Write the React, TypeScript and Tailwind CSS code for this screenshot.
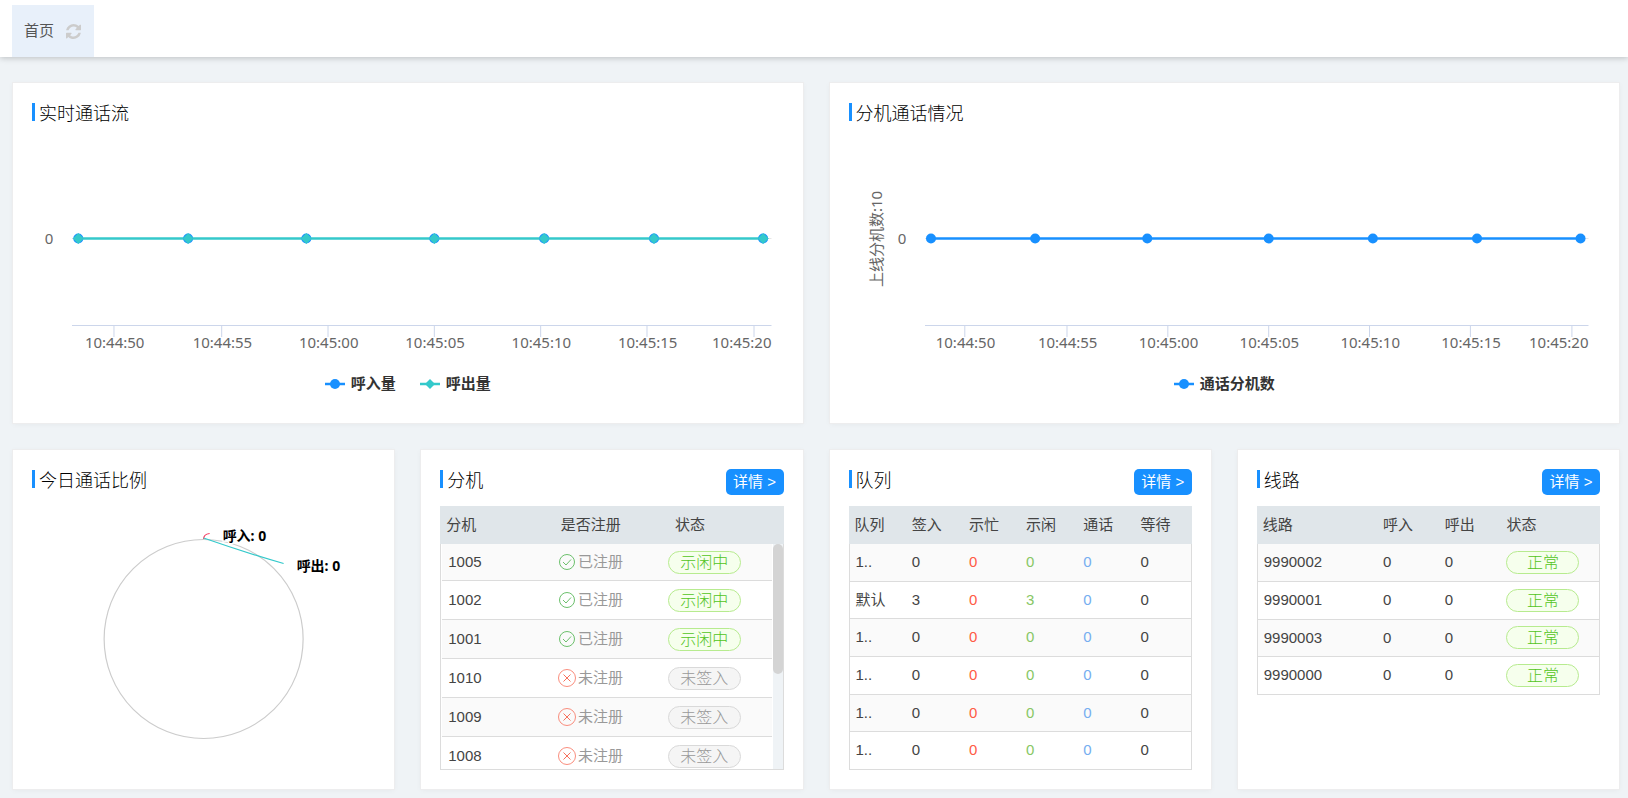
import type { ReactNode } from "react"
import clsx from "clsx"

const ticks = [
    { label: "10:44:50", x: 6 },
    { label: "10:44:55", x: 21.4 },
    { label: "10:45:00", x: 36.6 },
    { label: "10:45:05", x: 51.8 },
    { label: "10:45:10", x: 67 },
    { label: "10:45:15", x: 82.2 },
    { label: "10:45:20", x: 97.5 },
]
const points = [0.9, 16.6, 33.5, 51.8, 67.5, 83.2, 98.8]

const extensions = [
    { no: "1005", online: true },
    { no: "1002", online: true },
    { no: "1001", online: true },
    { no: "1010", online: false },
    { no: "1009", online: false },
    { no: "1008", online: false },
]

const queues = [
    ["1..", 0, 0, 0, 0, 0],
    ["默认", 3, 0, 3, 0, 0],
    ["1..", 0, 0, 0, 0, 0],
    ["1..", 0, 0, 0, 0, 0],
    ["1..", 0, 0, 0, 0, 0],
    ["1..", 0, 0, 0, 0, 0],
]
const queueColors = ["", "", "text-[#ff5b45]", "text-[#87c765]", "text-[#76aef0]", ""]

const lines = ["9990002", "9990001", "9990003", "9990000"]

function Card({ title, detail, children }: { title: string; detail?: boolean; children: ReactNode }) {
    return (
        <section className="min-w-0 bg-white p-[19px] shadow-[0_0_0_1px_#ededee,0_1px_6px_rgba(0,0,0,0.05)]">
            <div className="flex items-start justify-between">
                <h2 className="flex gap-1 text-lg leading-6 font-light text-black">
                    <span className="mt-px h-[18px] w-[3px] bg-[#1890ff]" />
                    {title}
                </h2>
                {detail && (
                    <button className="h-[26px] w-[58px] rounded-[5px] bg-[#1890ff] text-[15px] leading-[26px] text-white">
                        详情 &gt;
                    </button>
                )}
            </div>
            {children}
        </section>
    )
}

function Marker({ color, diamond }: { color: string; diamond?: boolean }) {
    return (
        <svg width="20" height="12" viewBox="0 0 20 12">
            <path d="M0 6H20" stroke={color} strokeWidth="2.5" />
            {diamond ? <path d="M10 1L15 6L10 11L5 6Z" fill={color} /> : <circle cx="10" cy="6" r="5" fill={color} />}
        </svg>
    )
}

type Series = { name: string; color: string; diamond?: boolean }

function LineChart({ series, yTitle }: { series: Series[]; yTitle?: string }) {
    const top = series[series.length - 1]
    return (
        <>
            <div className="flex pr-3 text-[15px]">
                <svg className={clsx("h-[230px] shrink-0 overflow-visible", yTitle ? "w-19" : "w-10")}>
                    {yTitle && (
                        <text transform="translate(33 113) rotate(-90)" textAnchor="middle" fill="#666">
                            {yTitle}
                        </text>
                    )}
                    <text x={yTitle ? 53 : 17} y="118" textAnchor="middle" fill="#666">0</text>
                </svg>
                <svg className="h-[230px] min-w-0 flex-1 overflow-visible">
                    <line x1="0" x2="100%" y1="112.5" y2="112.5" stroke="#e6e6e6" />
                    <line x1="0" x2="100%" y1="199.5" y2="199.5" stroke="#ccd6eb" />
                    {ticks.map((t, i) => (
                        <g key={t.label}>
                            <line x1={`${t.x}%`} x2={`${t.x}%`} y1="199" y2="211" stroke="#ccd6eb" />
                            <text
                                x={i === ticks.length - 1 ? "100%" : `${t.x + 0.1}%`}
                                y="222"
                                textAnchor={i === ticks.length - 1 ? "end" : "middle"}
                                fill="#666"
                            >
                                {t.label}
                            </text>
                        </g>
                    ))}
                    <line x1="0.9%" x2="98.8%" y1="112.5" y2="112.5" stroke={top.color} strokeWidth="2.5" />
                    {points.map((x) => (
                        <g key={x}>
                            <circle cx={`${x}%`} cy="112.5" r="5" fill="#1890ff" />
                            {top.diamond && (
                                <svg x={`${x}%`} y="112.5" className="overflow-visible">
                                    <path d="M0 -5L5 0L0 5L-5 0Z" fill={top.color} stroke={top.color} strokeLinejoin="round" />
                                </svg>
                            )}
                        </g>
                    ))}
                </svg>
            </div>
            <div className="mt-[18px] mb-[10px] flex h-5 items-center justify-center gap-6 text-[15px] leading-5 font-bold text-[#333]">
                {series.map((s) => (
                    <span key={s.name} className="flex items-center gap-[6px]">
                        <Marker color={s.color} diamond={s.diamond} />
                        {s.name}
                    </span>
                ))}
            </div>
        </>
    )
}

function PieChart() {
    return (
        <svg className="mt-[13px] h-[264px] w-full text-sm font-bold">
            <svg x="50%" y="133" className="overflow-visible">
                <circle r="99.5" fill="none" stroke="#ccc" strokeWidth="1.2" />
                <path d="M0 -100C0 -104 2 -105 6 -105.5" fill="none" stroke="#f5365c" strokeWidth="1.2" />
                <path d="M0 -101C20 -94 40 -87 80 -75.5" fill="none" stroke="#34c9cb" strokeWidth="1.2" />
                <g stroke="#fff" strokeWidth="3" paintOrder="stroke" fill="#000">
                    <text x="19" y="-98">呼入: 0</text>
                    <text x="93" y="-68">呼出: 0</text>
                </g>
            </svg>
        </svg>
    )
}

function StatusIcon({ ok }: { ok: boolean }) {
    return ok ? (
        <svg width="16" height="16" viewBox="0 0 16 16" fill="none" stroke="#6cc06c">
            <circle cx="8" cy="8" r="7.5" />
            <path d="M4 8L7 11L12 5.5" />
        </svg>
    ) : (
        <svg className="-mx-px" width="18" height="18" viewBox="0 0 18 18" fill="none" stroke="#f8705c">
            <circle cx="9" cy="9" r="8.5" strokeOpacity="0.8" />
            <path d="M5.5 5.5L12.5 12.5M12.5 5.5L5.5 12.5" />
        </svg>
    )
}

function Badge({ on, children }: { on: boolean; children: ReactNode }) {
    return (
        <span
            className={clsx(
                "block h-[23px] w-[73px] rounded-full border text-center text-base leading-[21px] font-light",
                on ? "border-[#b7eb8f] bg-[#f6ffed] text-[#52c41a]" : "border-[#d9d9d9] bg-[#f5f5f5] text-[#999]"
            )}
        >
            {children}
        </span>
    )
}

// the header stays in place while the rows scroll below it
function ExtensionTable() {
    return (
        <div className="relative mt-[11px]">
            <table className="block text-left text-[15px] text-[#444]">
                <thead className="block bg-[#e0e6ea]">
                    <tr className="grid h-[38px] grid-cols-3 items-center">
                        <th className="pl-[6px] font-normal">分机</th>
                        <th className="pl-[6px] font-normal">是否注册</th>
                        <th className="pl-[6px] font-normal">状态</th>
                    </tr>
                </thead>
                <tbody className="block h-[226px] overflow-y-auto border border-t-0 border-[#dcdcdc] pr-[11px] pl-px [scrollbar-width:none]">
                    {extensions.map((e) => (
                        <tr
                            key={e.no}
                            className="grid h-[39px] grid-cols-3 items-center border-b border-[#dcdcdc] first:h-[37px] odd:bg-[#fafafa]"
                        >
                            <td className="pl-[6px]">{e.no}</td>
                            <td className="flex items-center gap-[3px] pl-[7px] text-[#999]">
                                <StatusIcon ok={e.online} />
                                {e.online ? "已注册" : "未注册"}
                            </td>
                            <td className="pl-[6px]">
                                <Badge on={e.online}>{e.online ? "示闲中" : "未签入"}</Badge>
                            </td>
                        </tr>
                    ))}
                </tbody>
            </table>
            <div className="absolute top-[38px] right-px bottom-px w-[10px] bg-[#eff3f6]">
                <div className="h-[130px] rounded-full bg-[#d4d4d4]" />
            </div>
        </div>
    )
}

function QueueTable() {
    return (
        <table className="mt-[11px] h-[264px] w-full table-fixed border-separate border-spacing-0 text-left text-[15px] text-[#444]">
            <thead>
                <tr className="h-[38px] bg-[#e0e6ea]">
                    {["队列", "签入", "示忙", "示闲", "通话", "等待"].map((h) => (
                        <th key={h} className="pl-[6px] font-normal">{h}</th>
                    ))}
                </tr>
            </thead>
            <tbody>
                {queues.map((row, i) => (
                    <tr key={i} className="odd:bg-[#fafafa]">
                        {row.map((v, j) => (
                            <td
                                key={j}
                                className={clsx(
                                    "border-b border-[#dcdcdc] pl-[6px] first:border-l last:border-r",
                                    queueColors[j]
                                )}
                            >
                                {v}
                            </td>
                        ))}
                    </tr>
                ))}
            </tbody>
        </table>
    )
}

function LineTable() {
    return (
        <table className="mt-[11px] h-[189px] w-full table-fixed border-separate border-spacing-0 text-left text-[15px] text-[#444]">
            <thead>
                <tr className="h-[38px] bg-[#e0e6ea]">
                    <th className="w-[35%] pl-[6px] font-normal">线路</th>
                    <th className="w-[18%] pl-[6px] font-normal">呼入</th>
                    <th className="w-[18%] pl-[6px] font-normal">呼出</th>
                    <th className="pl-[6px] font-normal">状态</th>
                </tr>
            </thead>
            <tbody>
                {lines.map((no) => (
                    <tr key={no} className="odd:bg-[#fafafa]">
                        <td className="border-b border-l border-[#dcdcdc] pl-[6px]">{no}</td>
                        <td className="border-b border-[#dcdcdc] pl-[6px]">0</td>
                        <td className="border-b border-[#dcdcdc] pl-[6px]">0</td>
                        <td className="border-r border-b border-[#dcdcdc] pl-[6px]">
                            <Badge on>正常</Badge>
                        </td>
                    </tr>
                ))}
            </tbody>
        </table>
    )
}

function Header() {
    return (
        <header className="relative flex bg-white pt-[5px] pl-3 shadow-[0_1px_6px_rgba(0,0,0,0.22)]">
            <div className="flex h-[52px] items-center gap-3 bg-[#e8f0fa] pr-[13px] pl-3">
                <a href="#" className="text-[15px] text-[#555]">首页</a>
                <button aria-label="刷新">
                    <svg className="block" width="15" height="15" viewBox="0 0 1536 1536" fill="#ccc">
                        <path d="M1511 928q0 5-1 7-64 268-268 434.5t-478 166.5q-146 0-282.5-55t-243.5-157l-129 129q-19 19-45 19t-45-19-19-45v-448q0-26 19-45t45-19h448q26 0 45 19t19 45-19 45l-137 137q71 66 161 102t187 36q134 0 250-65t186-179q11-17 53-117 8-23 30-23h192q13 0 22.5 9.5t9.5 22.5zm25-800v448q0 26-19 45t-45 19h-448q-26 0-45-19t-19-45 19-45l138-138q-148-137-349-137-134 0-250 65t-186 179q-11 17-53 117-8 23-30 23h-199q-13 0-22.5-9.5t-9.5-22.5v-7q65-268 270-434.5t480-166.5q146 0 284 55.5t245 156.5l130-129q19-19 45-19t45 19 19 45z" />
                    </svg>
                </button>
            </div>
        </header>
    )
}

export default function App() {
    return (
        <div className="min-h-screen bg-[#eff3f6] font-['Liberation_Sans','Noto_Sans_CJK_SC',sans-serif]">
            <Header />
            <main className="grid gap-[27px] pt-[26px] pr-[9px] pb-[9px] pl-[13px]">
                <div className="grid grid-cols-2 gap-[27px] [&_svg]:font-['Noto_Sans','Noto_Sans_CJK_SC',sans-serif]">
                    <Card title="实时通话流">
                        <LineChart
                            series={[
                                { name: "呼入量", color: "#1890ff" },
                                { name: "呼出量", color: "#34c9cb", diamond: true },
                            ]}
                        />
                    </Card>
                    <Card title="分机通话情况">
                        <LineChart series={[{ name: "通话分机数", color: "#1890ff" }]} yTitle="上线分机数:10" />
                    </Card>
                </div>
                <div className="grid grid-cols-4 gap-[27px] [&_svg]:font-['Noto_Sans','Noto_Sans_CJK_SC',sans-serif]">
                    <Card title="今日通话比例">
                        <PieChart />
                    </Card>
                    <Card title="分机" detail>
                        <ExtensionTable />
                    </Card>
                    <Card title="队列" detail>
                        <QueueTable />
                    </Card>
                    <Card title="线路" detail>
                        <LineTable />
                    </Card>
                </div>
            </main>
        </div>
    )
}
